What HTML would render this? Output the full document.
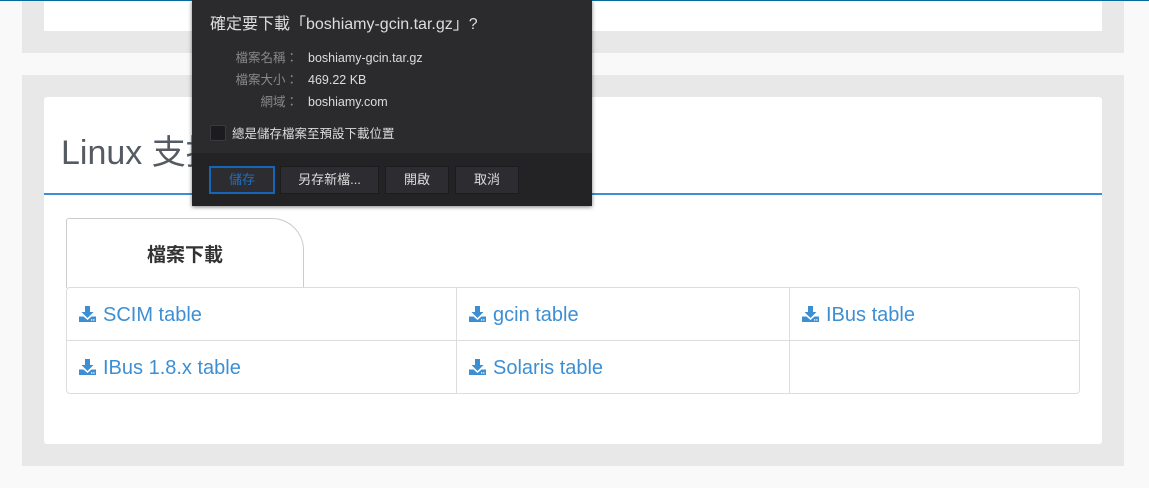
<!DOCTYPE html>
<html><head><meta charset="utf-8"><style>
*{margin:0;padding:0;box-sizing:border-box}
body{width:1149px;height:488px;background:#f9f9f9;position:relative;overflow:hidden;font-family:"Liberation Sans","Noto Sans CJK TC",sans-serif}
.abs{position:absolute}
.lnk{position:absolute;color:#3d8fd4;font-size:20px;line-height:24px;white-space:nowrap}
.lnk svg{position:absolute;left:-24px;top:3px}
.btn{position:absolute;top:166px;height:28px;border:1px solid #1c1c1e;background:#2d2d31;color:#ddd;font-size:13px;text-align:center;line-height:26px}
</style></head><body>
<div class="abs" style="left:0;top:0;width:1149px;height:1px;background:#0a6b9b"></div>
<div class="abs" style="left:22px;top:1px;width:1102px;height:52px;background:#e8e8e8"></div>
<div class="abs" style="left:44px;top:1px;width:1058px;height:30px;background:#fff"></div>
<div class="abs" style="left:22px;top:75px;width:1102px;height:391px;background:#e8e8e8"></div>
<div class="abs" style="left:44px;top:97px;width:1058px;height:347px;background:#fff;border-radius:3px"></div>
<div class="abs" style="left:61px;top:133px;font-size:34px;line-height:40px;color:#555b63">Linux 支援</div>
<div class="abs" style="left:44px;top:193px;width:1058px;height:2px;background:#3a8fd6"></div>
<div class="abs" style="left:66px;top:218px;width:238px;height:70px;background:#fff;border:1px solid #ccc;border-bottom:none;border-top-right-radius:32px;border-top-left-radius:3px"></div>
<div class="abs" style="left:66px;top:240px;width:238px;text-align:center;font-size:19px;font-weight:bold;color:#333">檔案下載</div>
<div class="abs" style="left:66px;top:287px;width:1014px;height:107px;border:1px solid #ddd;border-radius:4px;background:#fff"></div>
<div class="abs" style="left:67px;top:340px;width:1012px;height:1px;background:#ddd"></div>
<div class="abs" style="left:456px;top:288px;width:1px;height:105px;background:#ddd"></div>
<div class="abs" style="left:789px;top:288px;width:1px;height:105px;background:#ddd"></div>
<svg width="0" height="0" style="position:absolute"><defs><symbol id="dl" viewBox="0 0 17 16"><path d="M6 0h5v6h3.5l-6 6-6-6H6z" fill="#3d8fd4"/><path d="M0 10.5h4.5l4 3.5 4-3.5H17V16H0z" fill="#3d8fd4"/><rect x="12" y="13.3" width="1.3" height="1.3" fill="#fff"/><rect x="14.2" y="13.3" width="1.3" height="1.3" fill="#fff"/></symbol></defs></svg>
<div class="lnk" style="left:103px;top:303px"><svg width="17" height="16"><use href="#dl"/></svg>SCIM table</div>
<div class="lnk" style="left:493px;top:303px"><svg width="17" height="16"><use href="#dl"/></svg>gcin table</div>
<div class="lnk" style="left:826px;top:303px"><svg width="17" height="16"><use href="#dl"/></svg>IBus table</div>
<div class="lnk" style="left:103px;top:356px"><svg width="17" height="16"><use href="#dl"/></svg>IBus 1.8.x table</div>
<div class="lnk" style="left:493px;top:356px"><svg width="17" height="16"><use href="#dl"/></svg>Solaris table</div>
<div class="abs" style="left:192px;top:0;width:400px;height:206px;background:#2b2b2e;box-shadow:0 1px 4px rgba(0,0,0,.5)"></div>
<div class="abs" style="left:192px;top:153px;width:400px;height:53px;background:#232326"></div>
<div class="abs" style="left:210px;top:10px;font-size:16px;color:#ddd;white-space:nowrap">確定要下載「boshiamy-gcin.tar.gz」?</div>
<div class="abs" style="left:222px;top:47px;width:76px;text-align:right;font-size:12.5px;line-height:22px;color:#888">檔案名稱：<br>檔案大小：<br>網域：</div>
<div class="abs" style="left:308px;top:47px;font-size:12.5px;line-height:22px;color:#ddd">boshiamy-gcin.tar.gz<br>469.22 KB<br>boshiamy.com</div>
<div class="abs" style="left:210px;top:125px;width:16px;height:16px;background:#1c1c1e;border:1px solid #3a3a3e;border-radius:2px"></div>
<div class="abs" style="left:232px;top:123px;font-size:12.5px;color:#ddd">總是儲存檔案至預設下載位置</div>
<div class="btn" style="left:209px;width:66px;border:2px solid #1565b8;color:#1f6fc0;line-height:24px">儲存</div>
<div class="btn" style="left:280px;width:99px">另存新檔...</div>
<div class="btn" style="left:385px;width:64px">開啟</div>
<div class="btn" style="left:455px;width:64px">取消</div>
</body></html>
